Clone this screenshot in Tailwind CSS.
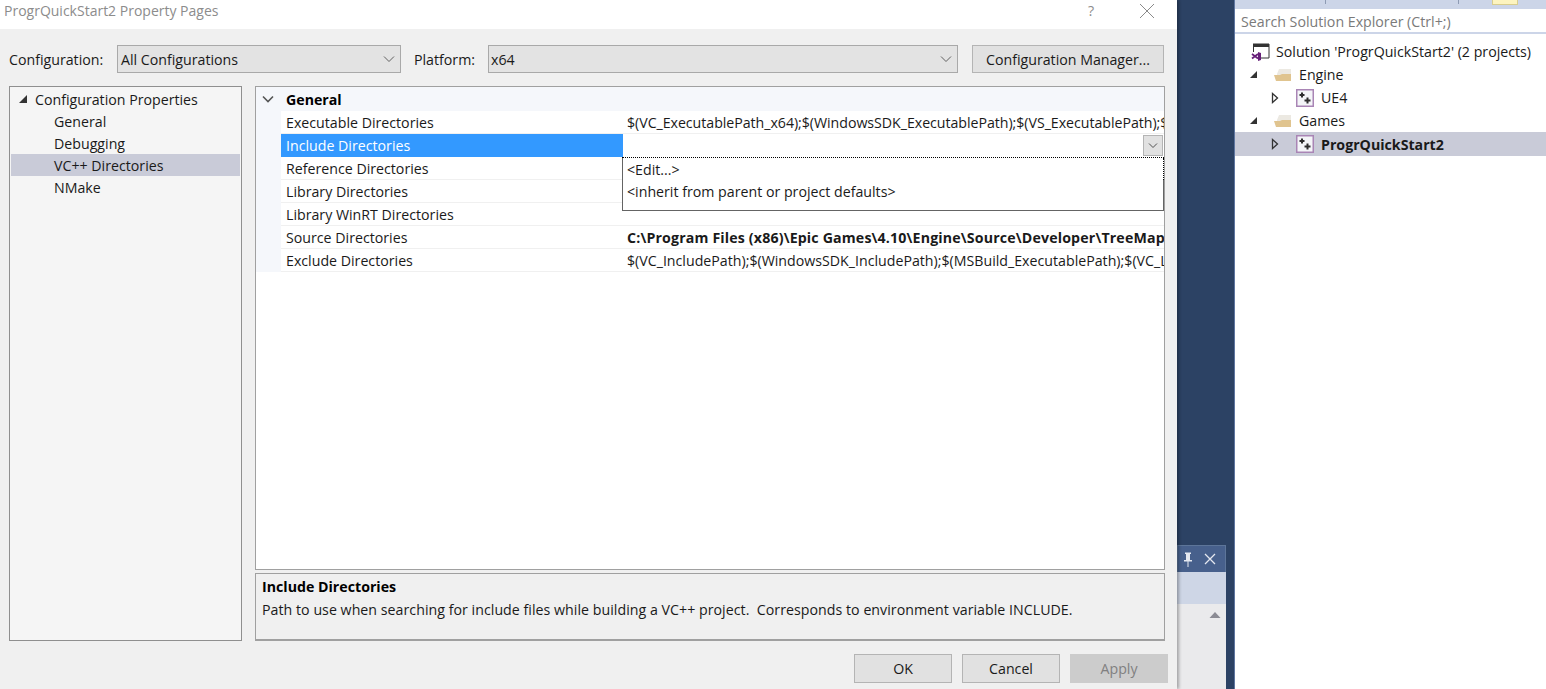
<!doctype html>
<html>
<head>
  <meta charset="UTF-8">
  <script src="https://cdn.jsdelivr.net/npm/@tailwindcss/browser@4"></script>
</head>
<body>
<div class="flex h-[689px] w-[1546px] overflow-hidden bg-white font-['Open_Sans',sans-serif] text-[14.2px] leading-[21px] text-[#1a1a1a]">
  <!-- Property pages dialog -->
  <div class="relative z-10 flex h-full w-[1177px] shrink-0 flex-col bg-[#f0f0f0] shadow-[2px_0_3px_rgba(0,0,0,0.3)]">
    <div class="flex h-[29px] shrink-0 items-center justify-between bg-white pl-[4px] pr-[22px] text-[#8c8c8c]">
      <span class="relative top-[-4px] text-[14px]">ProgrQuickStart2 Property Pages</span>
      <div class="flex items-center gap-[45px]">
        <span class="relative top-[-4px] text-[#8c8c8c]">?</span>
        <svg width="16" height="16" viewBox="0 0 16 16" class="relative top-[-4px]"><path d="M1 1 15 15M15 1 1 15" stroke="#8a8a8a" stroke-width="1" fill="none"/></svg>
      </div>
    </div>

    <div class="mt-[16px] flex h-[28px] shrink-0 items-center pl-[9px]">
      <span class="w-[108px]">Configuration:</span>
      <div class="flex h-[28px] w-[284px] items-center justify-between border border-[#a9a9a9] bg-[#e3e3e3] pl-[3px] pr-[5px]">
        <span>All Configurations</span>
        <svg width="12" height="8" viewBox="0 0 12 8"><path d="M1 1.500 6 6.500 11 1.500" stroke="#606060" fill="none"/></svg>
      </div>
      <span class="ml-[13px] w-[74px]">Platform:</span>
      <div class="flex h-[28px] w-[470px] items-center justify-between border border-[#a9a9a9] bg-[#e3e3e3] pl-[2px] pr-[5px]">
        <span>x64</span>
        <svg width="12" height="8" viewBox="0 0 12 8"><path d="M1 1.500 6 6.500 11 1.500" stroke="#606060" fill="none"/></svg>
      </div>
      <div class="ml-[14px] flex h-[28px] w-[192px] items-center justify-center border border-[#b4b4b4] bg-[#e1e1e1]">Configuration Manager...</div>
    </div>

    <div class="mt-[13px] flex h-[555px] shrink-0 pl-[9px]">
      <!-- category tree -->
      <div class="flex h-full w-[233px] shrink-0 flex-col border border-[#8f8f8f] bg-[#f5f5f5] px-[1px] pt-[1px]">
        <div class="flex h-[22px] items-center">
          <svg width="10" height="10" viewBox="0 0 10 10" class="ml-[7px] mr-[7px]"><path d="M9 1V9H1Z" fill="#333"/></svg>
          <span>Configuration Properties</span>
        </div>
        <div class="flex h-[22px] items-center pl-[43px]">General</div>
        <div class="flex h-[22px] items-center pl-[43px]">Debugging</div>
        <div class="flex h-[22px] items-center bg-[#c9cbd8] pl-[43px]">VC++ Directories</div>
        <div class="flex h-[22px] items-center pl-[43px]">NMake</div>
      </div>

      <div class="ml-[13px] flex h-full w-[910px] shrink-0 flex-col">
        <!-- property grid -->
        <div class="relative h-[484px] shrink-0 border border-[#a0a0a0] bg-white">
          <div class="flex h-[24px] items-center bg-[#f5f7fb]">
            <svg width="12" height="8" viewBox="0 0 12 8" class="ml-[6px] mr-[12px]"><path d="M1 1.500 6 6.500 11 1.500" stroke="#555" stroke-width="1.600" fill="none"/></svg>
            <span class="font-bold text-black">General</span>
          </div>
          <div class="flex h-[23px] border-l-[25px] border-[#f5f7fb]">
            <div class="flex w-[342px] shrink-0 items-center border-b border-[#f0f0f0] pl-[5px]">Executable Directories</div>
            <div class="flex min-w-0 flex-1 items-center overflow-hidden whitespace-nowrap border-b border-[#f0f0f0] pl-[4px] tracking-[-0.04px]">$(VC_ExecutablePath_x64);$(WindowsSDK_ExecutablePath);$(VS_ExecutablePath);$</div>
          </div>
          <div class="flex h-[23px] border-l-[25px] border-[#f5f7fb]">
            <div class="flex w-[342px] shrink-0 items-center bg-[#3399ff] pl-[5px] text-white">Include Directories</div>
            <div class="flex flex-1 items-center justify-end pr-[1px]">
              <div class="flex h-[21px] w-[20px] items-center justify-center border border-[#b4b4b4] bg-[#e1e1e1]">
                <svg width="10" height="6" viewBox="0 0 10 6"><path d="M1 .5 5 4.500 9 .5" stroke="#505050" fill="none"/></svg>
              </div>
            </div>
          </div>
          <div class="flex h-[23px] border-l-[25px] border-[#f5f7fb]">
            <div class="flex w-[342px] shrink-0 items-center border-b border-[#f0f0f0] pl-[5px]">Reference Directories</div>
            <div class="flex-1 border-b border-[#f0f0f0]"></div>
          </div>
          <div class="flex h-[23px] border-l-[25px] border-[#f5f7fb]">
            <div class="flex w-[342px] shrink-0 items-center border-b border-[#f0f0f0] pl-[5px]">Library Directories</div>
            <div class="flex-1 border-b border-[#f0f0f0]"></div>
          </div>
          <div class="flex h-[23px] border-l-[25px] border-[#f5f7fb]">
            <div class="flex w-[342px] shrink-0 items-center border-b border-[#f0f0f0] pl-[5px]">Library WinRT Directories</div>
            <div class="flex-1 border-b border-[#f0f0f0]"></div>
          </div>
          <div class="flex h-[23px] border-l-[25px] border-[#f5f7fb]">
            <div class="flex w-[342px] shrink-0 items-center border-b border-[#f0f0f0] pl-[5px]">Source Directories</div>
            <div class="flex min-w-0 flex-1 items-center overflow-hidden whitespace-nowrap border-b border-[#f0f0f0] pl-[4px] font-bold tracking-[0.15px]">C:\Program Files (x86)\Epic Games\4.10\Engine\Source\Developer\TreeMap</div>
          </div>
          <div class="flex h-[23px] border-l-[25px] border-[#f5f7fb]">
            <div class="flex w-[342px] shrink-0 items-center border-b border-[#f0f0f0] pl-[5px]">Exclude Directories</div>
            <div class="flex min-w-0 flex-1 items-center overflow-hidden whitespace-nowrap border-b border-[#f0f0f0] pl-[4px]">$(VC_IncludePath);$(WindowsSDK_IncludePath);$(MSBuild_ExecutablePath);$(VC_L</div>
          </div>
          <!-- combo dropdown, focus rectangle dotted along the top and upper right -->
          <div class="absolute left-[366px] top-[70px] h-[54px] w-[542px] border border-[#646464] bg-white pl-[4px]">
            <div class="absolute left-[-1px] right-[-1px] top-[-1px] h-[1px] border-t border-dotted border-black bg-white"></div>
            <div class="absolute right-[-1px] top-0 h-[22px] w-[1px] border-r border-dotted border-black bg-white"></div>
            <div class="flex h-[22px] items-center">&lt;Edit...&gt;</div>
            <div class="flex h-[22px] items-center">&lt;inherit from parent or project defaults&gt;</div>
          </div>
        </div>
        <!-- description -->
        <div class="mt-[3px] h-[68px] shrink-0 border border-b-2 border-[#a0a0a0] bg-[#f0f0f0] pl-[6px] pt-[2px]">
          <div class="font-bold text-black">Include Directories</div>
          <div class="mt-[2px] whitespace-pre tracking-[0.03px]">Path to use when searching for include files while building a VC++ project.  Corresponds to environment variable INCLUDE.</div>
        </div>
      </div>
    </div>

    <div class="mt-[13px] flex shrink-0 justify-end gap-[10px] pr-[9px]">
      <div class="flex h-[29px] w-[98px] items-center justify-center border border-[#b4b4b4] bg-[#e1e1e1]">OK</div>
      <div class="flex h-[29px] w-[98px] items-center justify-center border border-[#b4b4b4] bg-[#e1e1e1]">Cancel</div>
      <div class="flex h-[29px] w-[98px] items-center justify-center bg-[#cccccc] text-[#808080]">Apply</div>
    </div>
  </div>

  <!-- IDE background between dialog and solution explorer -->
  <div class="flex h-full w-[58px] shrink-0 flex-col border-r border-[#5f76a0] bg-[#2c4264] pr-[8px] pt-[545px]">
    <div class="flex h-[27px] shrink-0 items-center justify-end gap-[11px] border border-b-0 border-[#5d7599] bg-[#47608c] pr-[9px]">
      <svg width="10" height="15" viewBox="0 0 10 15"><path d="M2 .5H8V2H7V8H9V9.500H5.500V15H4.500V9.500H1V8H3V2H2Z" fill="#e4e8f0"/></svg>
      <svg width="12" height="12" viewBox="0 0 12 12"><path d="M1 1 11 11M11 1 1 11" stroke="#e4e8f0" stroke-width="1.300" fill="none"/></svg>
    </div>
    <div class="h-[32px] shrink-0 bg-[#ced6e6]"></div>
    <div class="flex flex-1 justify-end bg-[#eaeaec] pr-[5px] pt-[7px]">
      <svg width="12" height="8" viewBox="0 0 12 8"><path d="M6 1 11.500 7H.5Z" fill="#8b8b94"/></svg>
    </div>
  </div>

  <!-- Solution Explorer -->
  <div class="flex h-full w-[311px] shrink-0 flex-col bg-white">
    <div class="flex h-[9px] shrink-0 items-start bg-[#ccd5e8]">
      <div class="ml-[90px] h-[4px] w-px bg-[#8e9bb4]"></div>
      <div class="ml-[132px] h-[4px] w-px bg-[#8e9bb4]"></div>
      <div class="ml-[33px] h-[5px] w-[26px] border-x border-b border-[#d8cd8e] bg-[#fdf4bf]"></div>
    </div>
    <div class="flex h-[25px] shrink-0 items-center border-b-2 border-[#ccd5e8] pl-[6px] pt-[1px] text-[#7a7a7a]">Search Solution Explorer (Ctrl+;)</div>
    <div class="mt-[6px] flex flex-col">
      <div class="flex h-[23px] items-center pl-[16px]">
        <svg width="20" height="18" viewBox="0 0 20 18" class="mr-[5px]">
          <path d="M2 1H18V15H10" stroke="#333" fill="none"/><path d="M2 1H18V4H2Z" fill="#333"/><path d="M2.500 1V9" stroke="#333"/>
          <path d="M1 11 7 15.500M1 15.500 7 11" stroke="#68217a" stroke-width="1.800" fill="none"/><path d="M7 9 10 10V17L7 18Z" fill="#68217a"/>
        </svg>
        <span>Solution 'ProgrQuickStart2' (2 projects)</span>
      </div>
      <div class="flex h-[23px] items-center pl-[14px]">
        <svg width="9" height="9" viewBox="0 0 9 9" class="mr-[16px]"><path d="M8 1V8H1Z" fill="#333"/></svg>
        <svg width="18" height="14" viewBox="0 0 18 14" class="mr-[7px]"><path d="M3 6 5 1H17V13H3Z" fill="#ece9e2"/><path d="M0 7H6L8 6H17V13H2Z" fill="#e0c48f"/></svg>
        <span>Engine</span>
      </div>
      <div class="flex h-[23px] items-center pl-[36px]">
        <svg width="9" height="12" viewBox="0 0 9 12" class="mr-[16px]"><path d="M1.500 1.500 6.500 6 1.500 10.500Z" fill="white" stroke="#333" stroke-width="1.300"/></svg>
        <svg width="18" height="18" viewBox="0 0 18 18" class="mr-[7px]"><path d="M.75 .75H17.250V17.250H.75Z" fill="#f4f5f8" stroke="#a985b5" stroke-width="1.500"/><path d="M3.500 6H8.500M6 3.500V8.500M8.500 11.500H14.500M11.500 8.500V14.500" stroke="#2e2e2e" stroke-width="2"/></svg>
        <span>UE4</span>
      </div>
      <div class="flex h-[23px] items-center pl-[14px]">
        <svg width="9" height="9" viewBox="0 0 9 9" class="mr-[16px]"><path d="M8 1V8H1Z" fill="#333"/></svg>
        <svg width="18" height="14" viewBox="0 0 18 14" class="mr-[7px]"><path d="M3 6 5 1H17V13H3Z" fill="#ece9e2"/><path d="M0 7H6L8 6H17V13H2Z" fill="#e0c48f"/></svg>
        <span>Games</span>
      </div>
      <div class="flex h-[24px] items-center bg-[#c9cbd8] pl-[36px]">
        <svg width="9" height="12" viewBox="0 0 9 12" class="mr-[16px]"><path d="M1.500 1.500 6.500 6 1.500 10.500Z" fill="#c9cbd8" stroke="#333" stroke-width="1.300"/></svg>
        <svg width="18" height="18" viewBox="0 0 18 18" class="mr-[7px]"><path d="M.75 .75H17.250V17.250H.75Z" fill="#f4f5f8" stroke="#a985b5" stroke-width="1.500"/><path d="M3.500 6H8.500M6 3.500V8.500M8.500 11.500H14.500M11.500 8.500V14.500" stroke="#2e2e2e" stroke-width="2"/></svg>
        <span class="font-bold">ProgrQuickStart2</span>
      </div>
    </div>
  </div>
</div>
</body>
</html>
